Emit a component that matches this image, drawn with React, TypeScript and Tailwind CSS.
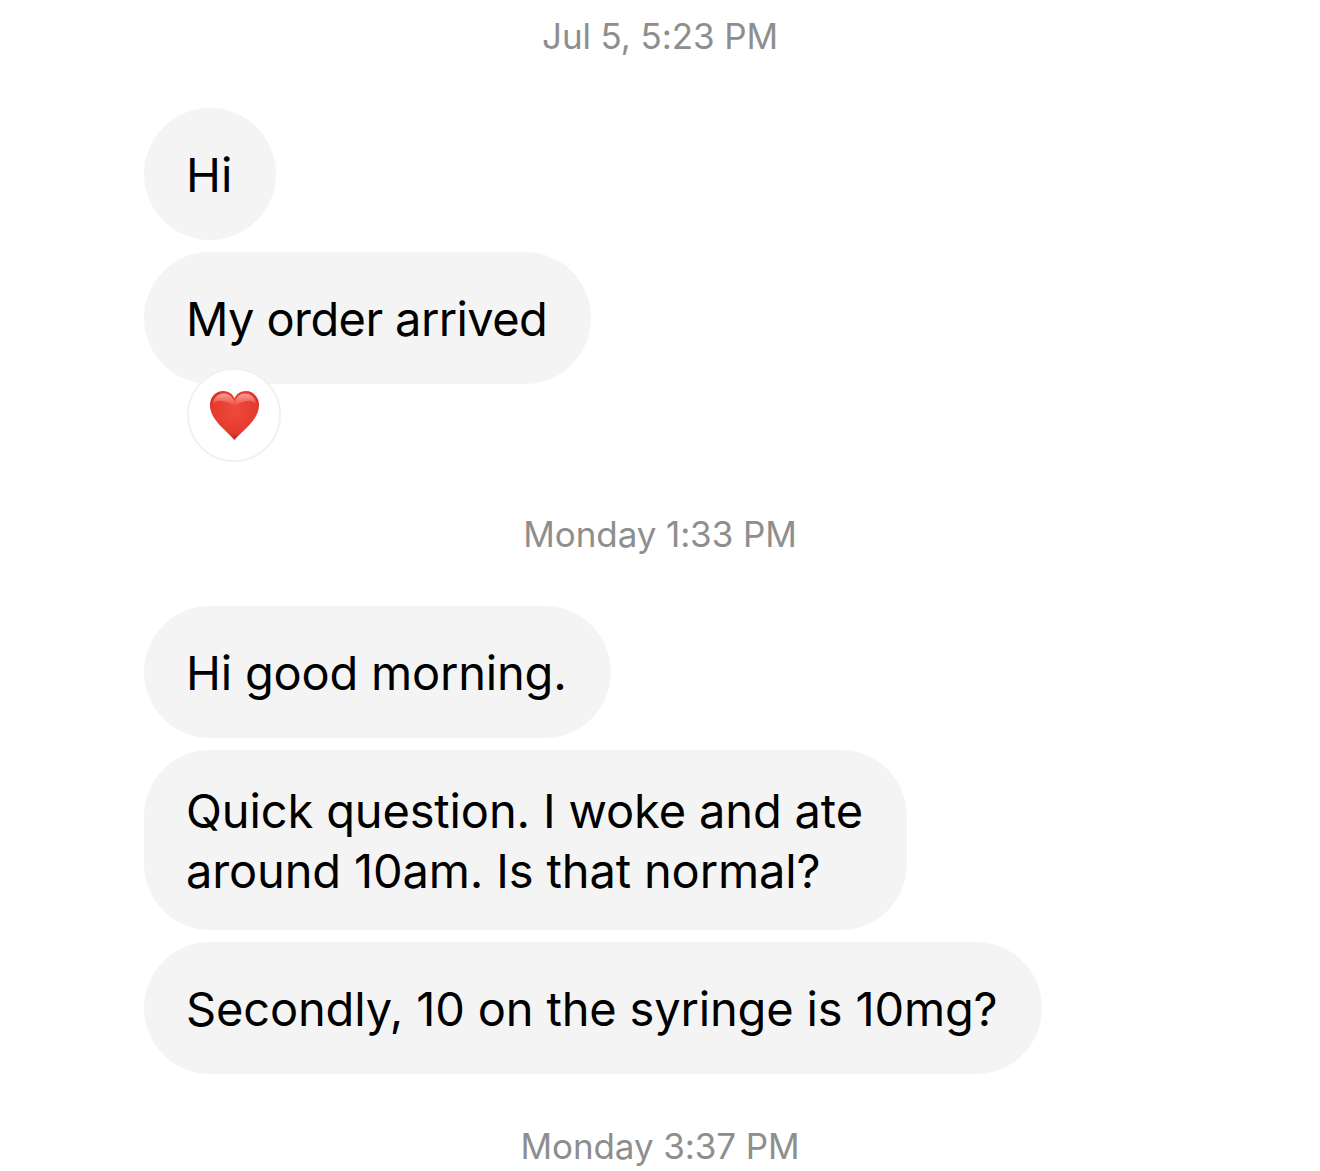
const font = "font-['Inter','Liberation_Sans',sans-serif]";

function Stamp({ text, className }: { text: string; className: string }) {
  return <div className={`text-center text-[35px] leading-[40px] tracking-[-0.1px] text-[#8e8e8e] ${className}`}>{text}</div>;
}

function Bubble({ children, className = '' }: { children: React.ReactNode; className?: string }) {
  return (
    <div className={`w-fit rounded-[66px] bg-[#f4f4f4] pl-[42px] pr-[44px] text-[47px] leading-[60px] text-black ${className}`}>
      {children}
    </div>
  );
}

function Heart() {
  return (
    <svg viewBox="0 0 50 50" className="h-[49px] w-[49px]">
      <defs>
        <radialGradient id="heart" cx="0.5" cy="0.4" r="0.62">
          <stop offset="0" stopColor="#ee4a3c" />
          <stop offset="0.75" stopColor="#e53a2e" />
          <stop offset="1" stopColor="#b51d17" />
        </radialGradient>
        <linearGradient id="sheen" x1="0" y1="0" x2="0" y2="1">
          <stop offset="0" stopColor="#ffb4a8" stopOpacity="0.85" />
          <stop offset="1" stopColor="#ffb4a8" stopOpacity="0" />
        </linearGradient>
      </defs>
      <path d="M25 50C19 42 0 30 0 14.500 0 6 6 0 13.500 0 19 0 23 3 25 7.500 27 3 31 0 36.500 0 44 0 50 6 50 14.500 50 30 31 42 25 50Z" fill="url(#heart)" />
      <path d="M3 13C4 6 9 2.500 14 2.500 19 2.500 23 6 25 11 27 6 31 2.500 36 2.500 41 2.500 46 6 47 13 42 8 34 9 25 16 16 9 8 8 3 13Z" fill="url(#sheen)" />
    </svg>
  );
}

export default function App() {
  return (
    <div className={`h-[1171px] w-[1320px] overflow-hidden bg-white ${font}`}>
      <Stamp text="Jul 5, 5:23 PM" className="pt-[16px]" />
      <div className="mt-[52px] flex flex-col pl-[144px]">
        <Bubble className="pt-[37px] pb-[35px]">Hi</Bubble>
        <Bubble className="relative mt-[12px] pt-[37px] pb-[35px] tracking-[-0.6px]">
          My order arrived
          <div className="absolute left-[43px] top-[116px] flex h-[94px] w-[94px] items-center justify-center rounded-full border-2 border-[#f1f1f1] bg-white">
            <Heart />
          </div>
        </Bubble>
      </div>
      <Stamp text="Monday 1:33 PM" className="mt-[130px]" />
      <div className="mt-[52px] flex flex-col pl-[144px]">
        <Bubble className="pt-[37px] pb-[35px] tracking-[-0.2px]">Hi good morning.</Bubble>
        <Bubble className="mt-[12px] pt-[31px] pb-[29px] tracking-[-0.14px]">
          Quick question. I woke and ate
          <br />
          around 10am. Is that normal?
        </Bubble>
        <Bubble className="mt-[12px] pt-[37px] pb-[35px] tracking-[-0.16px]">Secondly, 10 on the syringe is 10mg?</Bubble>
      </div>
      <Stamp text="Monday 3:37 PM" className="mt-[52px]" />
    </div>
  );
}
